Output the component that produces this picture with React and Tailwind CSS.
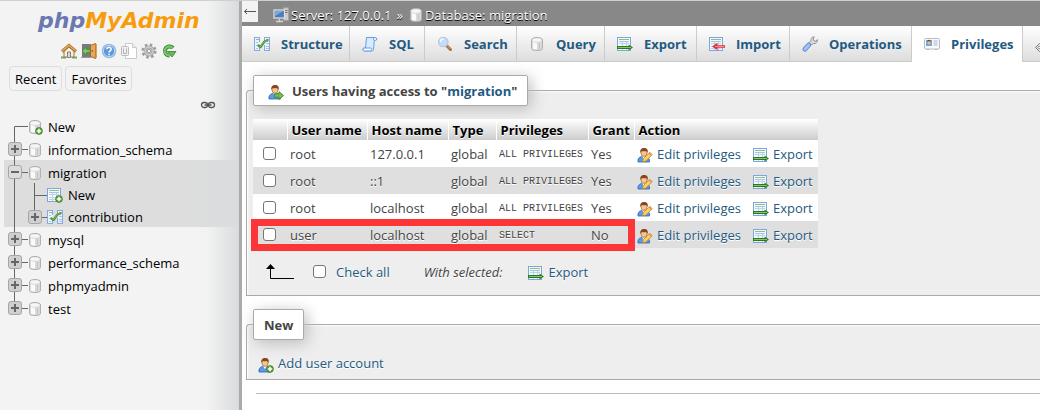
import React from 'react';

function Svg({ children, className = '' }) {
  return (
    <svg width="16" height="16" viewBox="0 0 16 16" fill="none" aria-hidden="true" className={'block shrink-0 ' + className}>
      {children}
    </svg>
  );
}

function Plus() {
  return (
    <g>
      <circle cx="12" cy="12" r="3.4" fill="#5fa53c" stroke="#3f7d26" strokeWidth=".8" />
      <path d="M12 9.800v4.400M9.800 12h4.400" stroke="#fff" strokeWidth="1.500" />
    </g>
  );
}

function Cylinder() {
  return (
    <g>
      <path d="M2.500 4c0-1.700 2.500-2.500 5.500-2.500s5.500.8 5.500 2.500v8.500c0 1.400-2.500 2-5.500 2s-5.500-.6-5.500-2z" fill="#d9d9d9" stroke="#b0b0b0" />
      <path d="M4 6c2 .8 3 .8 4 .8v6.700c-2 0-4-.4-4-1z" fill="#fafafa" />
      <path d="M10.500 7v6" stroke="#c4c4c4" />
      <ellipse cx="8" cy="4" rx="4.600" ry="1.800" fill="#f6f6f6" />
    </g>
  );
}

function Sheet() {
  return (
    <g>
      <rect x=".5" y="1.500" width="13" height="13" fill="#f4f9ff" stroke="#7fa6dc" />
      <path d="M2 3.500h10" stroke="#8cc27e" />
      <path d="M2 5.500h10" stroke="#a9c2e6" />
      <path d="M2 7.500h10M2 10.500h10M2 12.500h10M5.500 6v8M9.500 6v8" stroke="#bdd0ec" />
    </g>
  );
}

function Person() {
  return (
    <g>
      <path d="M1 15c-.6-3 1-5 3.500-5.500h4.500c2.500.5 4 2.500 3.500 5.500z" fill="#5a9be6" stroke="#2c62b5" strokeWidth=".8" />
      <path d="M5 9l2 3 2-3z" fill="#fff" />
      <ellipse cx="7" cy="5.800" rx="3" ry="3.600" fill="#f3c795" stroke="#a5652d" strokeWidth=".7" />
      <path d="M3.300 6C2.800 2.500 4.600.8 7.200.9c2.700 0 4.200 1.900 3.500 5.100-.7-1-1-1.800-1.400-2C7.500 4.400 5.600 4.200 4.500 4z" fill="#87461b" />
    </g>
  );
}

const ICONS = {
  db: <Cylinder />,
  dbNew: <g><Cylinder /><Plus /></g>,
  tableNew: <g><Sheet /><Plus /></g>,
  structure: (
    <g>
      <path d="M0 1h6v14H0zM10 1h6v14h-6z" fill="#eaf2fc" />
      <path d="M.5 1v14M5.500 1v5M5.500 11v4M10.500 1v4M10.500 9v6M15.500 1v14M0 14.500h6M10 14.500h6M0 1.500h6M10 1.500h6" stroke="#86abdf" />
      <path d="M2 3.500h3M12 3.500h3" stroke="#8cc27e" />
      <path d="M2 6.500h2M2 9.500h2M2 12.500h2M12 7.500h3M12 10.500h3M12 12.500h3" stroke="#a9c2e6" />
      <path d="M4.500 9.500L6.500 11l4-5.500 3-1" stroke="#4b8f3f" strokeWidth="2.200" strokeLinejoin="round" strokeLinecap="round" />
      <path d="M5 9.700l1.500 1 3.700-5.200 3.200-1" stroke="#7fbf70" strokeWidth=".8" />
    </g>
  ),
  sql: (
    <g stroke="#6a9de0">
      <path d="M4.500 1.500h9c1.700 0 1.800 3 0 3h-1.200l-.8 9c-.2 1.300-1 1.500-2 1.500H2.300c-1.800 0-2-3-.3-3h1.500z" fill="#d8eafe" />
      <path d="M2.500 12h6.500c1.200 0 .8 2.500 0 3H2.300C.5 14.500.7 12 2.500 12zM12.300 4.500c-1.200 0-1.200-3 .7-3" fill="#f5faff" />
    </g>
  ),
  search: (
    <g>
      <path d="M9.500 9.500l4 4" stroke="#a56d3b" strokeWidth="3" strokeLinecap="round" />
      <path d="M10 9.500l3.500 3.500" stroke="#d9a46e" strokeLinecap="round" />
      <circle cx="6.300" cy="6" r="4.700" fill="#c4ddfa" stroke="#b3c8e4" strokeWidth="1.300" />
      <path d="M3.500 6c0-2 1-3 3-3" stroke="#fff" strokeWidth="1.300" />
    </g>
  ),
  export: (
    <g>
      <Sheet />
      <path d="M0 11.500h12" stroke="#2b7a1f" strokeWidth="3" />
      <path d="M11.500 8.500l4.500 3-4.500 3z" fill="#2b7a1f" />
      <path d="M1 11.500h13" stroke="#86c36b" />
    </g>
  ),
  import: (
    <g>
      <Sheet />
      <path d="M16 10.500H8" stroke="#dc3535" strokeWidth="2.600" />
      <path d="M8.500 6.800L3 10.500l5.500 3.700z" fill="#dc3535" />
      <path d="M15 10.500H6" stroke="#fa8e8e" />
    </g>
  ),
  wrench: (
    <g>
      <path d="M7.500 9.500L6 7.500l3-2.500c-.4-2.500 1-4.200 3.300-4.200L11.200 3l.6 1.700 1.800.4 1.900-1.500c.3 2.800-1.700 4.400-4.100 4z" fill="#dadada" stroke="#8d8d8d" strokeWidth=".9" />
      <path d="M3 13.200l3.700-4.200" stroke="#5d86cf" strokeWidth="4.800" strokeLinecap="round" />
      <path d="M3 13.200l3.700-4.200" stroke="#a3c3f5" strokeWidth="3" strokeLinecap="round" />
    </g>
  ),
  card: (
    <g>
      <rect x=".5" y="2.500" width="15" height="10.500" rx="1" fill="#fafafa" stroke="#bababa" />
      <rect x="2" y="4" width="6" height="6" fill="#6aa7e8" />
      <ellipse cx="5" cy="6.500" rx="1.500" ry="2" fill="#eeb988" />
      <path d="M3.300 6c0-3 3.500-3 3.500 0l-1.500-1z" fill="#7a431e" />
      <path d="M9.500 5h4M9.500 7h4M9.500 9h4M3 13.500h2M11 13.500h2" stroke="#9cb7d5" />
    </g>
  ),
  users: (
    <g>
      <Person />
      <path d="M6.500 9.800H11V7.600l4.600 4-4.600 3.900v-2.300H6.500z" fill="#75bd55" stroke="#3c812a" strokeWidth=".8" />
    </g>
  ),
  userNew: <g><Person /><Plus /></g>,
  userEdit: (
    <g>
      <Person />
      <path d="M5.500 14.800l.8-3.200 6.500-6.300 2.500 2.400-6.500 6.300z" fill="#fbd25c" stroke="#c88722" strokeWidth=".8" />
      <path d="M12 6l2.600 2.500" stroke="#e98d74" strokeWidth="1.300" />
    </g>
  ),
  home: (
    <g>
      <path d="M0 14.500h5M11 14.500h5" stroke="#72ad4a" strokeWidth="2" />
      <path d="M3 7.500v6.500h10V7.500l-5-4.500z" fill="#f8efdc" stroke="#9b7b51" />
      <path d="M6.500 9h3v5.500h-3z" fill="#d9d9d9" stroke="#818181" />
      <path d="M1 8.500l7-6 7 6" stroke="#a5692b" strokeWidth="3" />
      <path d="M1 8.300l7-6 7 6" stroke="#e5b069" strokeWidth="1.400" />
    </g>
  ),
  exit: (
    <g>
      <path d="M1 1h9v13H1z" fill="#777b80" />
      <path d="M0 14.500h10" stroke="#999" />
      <path d="M9.500 2.500l5-2v15l-5-2z" fill="#e7a85a" stroke="#a8682b" />
      <path d="M15 1v14" stroke="#c88745" strokeWidth="1.500" />
      <path d="M9 6.500H5.500V4L1 8l4.500 4V9.500H9z" fill="#7cc863" stroke="#3f8b30" strokeWidth=".8" />
      <circle cx="11.300" cy="8" r=".8" fill="#7a4614" />
    </g>
  ),
  help: (
    <g>
      <circle cx="8" cy="8" r="6.700" fill="#5e98da" stroke="#9ab9df" strokeWidth="1.200" />
      <circle cx="8" cy="8" r="5.600" stroke="#d8e8fa" strokeWidth=".8" />
      <path d="M5.900 6.300c.1-2.700 4.300-2.600 4.200 0 0 1.500-2 1.500-2 3.200M8 10.700v1.600" stroke="#fff" strokeWidth="1.600" />
    </g>
  ),
  docs: (
    <g>
      <path d="M4.500.5h7l4 4v11h-11z" fill="#fff" stroke="#cacaca" />
      <path d="M11.500.5v4h4" fill="#eee" stroke="#cacaca" />
      <rect x=".5" y="3.500" width="7" height="9" rx="1" fill="#f0f0f0" stroke="#bbb" />
      <path d="M2.500 5.500v5h3v-5" stroke="#b5b5b5" />
    </g>
  ),
  gear: (
    <g>
      <circle cx="8" cy="8" r="6.300" stroke="#9b9b9b" strokeWidth="2.600" strokeDasharray="2.500 2.448" />
      <circle cx="8" cy="8" r="4" fill="#dedede" stroke="#a3a3a3" strokeWidth="3" />
      <circle cx="8" cy="8" r="4" stroke="#cfcfcf" strokeWidth="1.400" />
      <circle cx="8" cy="8" r="1.800" fill="#f3f3f3" stroke="#999" />
    </g>
  ),
  reload: (
    <g>
      <path d="M12 5A4.600 4.600 0 1 0 8.500 12.600" stroke="#388232" strokeWidth="4" />
      <path d="M11.800 5.200A4.500 4.500 0 1 0 8.500 12.500" stroke="#74c568" strokeWidth="2.400" />
      <path d="M6.500 8.500H15L11 14z" fill="#65b957" stroke="#388232" strokeWidth=".8" />
    </g>
  ),
  server: (
    <g>
      <path d="M10.500.8h5v12.500h-5z" fill="#cdcdcd" stroke="#a3a3a3" />
      <path d="M12 3.500h2.500M12 5.500h2.500" stroke="#6d6d6d" />
      <rect x="1" y="3" width="10.500" height="8" fill="#4d7dbb" stroke="#dcdcdc" strokeWidth="1.300" />
      <path d="M2 4h8.500l-8.500 5z" fill="#7da6dc" />
      <path d="M6.300 12v2M3 14.500h7" stroke="#d5d5d5" strokeWidth="1.300" />
    </g>
  ),
  link: (
    <g stroke="#555">
      <rect x="1.500" y="4.500" width="6" height="5" rx="2.500" strokeWidth="1.300" />
      <rect x="8.500" y="4.500" width="6" height="5" rx="2.500" strokeWidth="1.300" />
      <path d="M4.500 7h7" strokeWidth="1.500" />
    </g>
  ),
  diamonds: (
    <g stroke="#777">
      <path d="M5.500 4.500L1.500 8.500l4 4 4-4z" fill="#e5e5e5" />
      <path d="M5.500 7l-1.500 1.500L5.500 10 7 8.500z" fill="#fff" />
    </g>
  ),
};

function Icon({ name, className }) {
  return <Svg className={className}>{ICONS[name]}</Svg>;
}

const LINE = '#666';

function Branch({ kind }) {
  return (
    <svg width="20" height="23" viewBox="0 0 20 23" fill="none" aria-hidden="true" className="block shrink-0">
      {kind === 'first' && <path d="M6.500 23V12.500H20" stroke={LINE} />}
      {kind === 'pass' && <path d="M6.500 0v23" stroke={LINE} />}
      {kind === 'tee' && <path d="M6.500 0v23M6.500 12.500H20" stroke={LINE} />}
      {(kind === 'plus' || kind === 'minus' || kind === 'last') && (
        <g>
          <path d={kind === 'last' ? 'M6.500 0v12M13 12.500h7' : 'M6.500 0v23M13 12.500h7'} stroke={LINE} />
          <rect x=".5" y="5.500" width="13" height="13" rx="2.500" fill={kind === 'minus' ? '#dcdcdc' : '#d0d0d0'} stroke="#a6a6a6" />
          <path d={kind === 'minus' ? 'M3 12h8' : 'M3 12h8M7 8v8'} stroke="#666" strokeWidth="2" />
        </g>
      )}
    </svg>
  );
}

function TreeRow({ branches, icon, label, nested }) {
  return (
    <li className={'flex items-center overflow-hidden pl-[4px] ' + (nested ? 'h-[22px]' : 'h-[23px]')}>
      {branches.map((b, i) => <Branch key={i} kind={b} />)}
      <Icon name={icon} className="mt-[2px] -ml-px" />
      <a href="#tree" className="ml-[5px] pt-[2px] leading-[20px] text-black">{label}</a>
    </li>
  );
}

const TABS = [
  ['structure', 'Structure', 'w-[108px]'],
  ['sql', 'SQL', 'w-[75px]'],
  ['search', 'Search', 'w-[92px]'],
  ['db', 'Query', 'w-[88px]'],
  ['export', 'Export', 'w-[92px]'],
  ['import', 'Import', 'w-[93px]'],
  ['wrench', 'Operations', 'w-[122px]'],
  ['card', 'Privileges', 'w-[111px]'],
];

const USERS = [
  ['root', '127.0.0.1', 'ALL PRIVILEGES', 'Yes'],
  ['root', '::1', 'ALL PRIVILEGES', 'Yes'],
  ['root', 'localhost', 'ALL PRIVILEGES', 'Yes'],
  ['user', 'localhost', 'SELECT', 'No'],
];

const HEADS = [
  ['', 'w-[34px]'],
  ['User name', 'w-[80px]'],
  ['Host name', 'w-[81px]'],
  ['Type', 'w-[48px]'],
  ['Privileges', 'w-[92px]'],
  ['Grant', 'w-[46px]'],
  ['Action', 'w-[184px]'],
];

const CHECK = 'block size-[13px] appearance-none rounded-[3px] border border-[#767676] bg-white';
const LEGEND = 'ml-[6px] flex h-[31px] items-center rounded-[2px] border border-[#aaa] bg-white px-[10px] font-bold shadow-[3px_3px_15px_#bbb]';
const FIELDSET = 'ml-[4px] min-w-0 rounded-tl-[4px] border border-r-0 border-[#aaa] bg-[#eee] shadow-[inset_1px_1px_2px_#fff]';

function IconLink({ icon, children }) {
  return (
    <a href="#action" className="flex items-center gap-[4px] whitespace-nowrap text-[#235a81]">
      <Icon name={icon} className="mt-[3px]" />
      {children}
    </a>
  );
}

function Sidebar() {
  return (
    <aside className="w-[242px] shrink-0 border-r-[3px] border-[#aaa] bg-[#f3f3f3] bg-[linear-gradient(to_right,#f3f3f3_86%,#d9dcde)] text-black">
      <div className="pl-[38px] pt-[2px] text-[22px] leading-[32px]">
        <a href="#home" className="font-['DejaVu_Sans',sans-serif] font-bold italic text-[#6c78af]">
          php<span className="text-[#f89c0e]">MyAdmin</span>
        </a>
      </div>
      <nav aria-label="Shortcuts" className="flex gap-[4px] pl-[61px] pt-[6px]">
        {['home', 'exit', 'help', 'docs', 'gear', 'reload'].map((n) => (
          <a key={n} href="#shortcut" aria-label={n}><Icon name={n} /></a>
        ))}
      </nav>
      <div className="flex gap-[3px] pl-[9px] pt-[7px]">
        {['Recent', 'Favorites'].map((t) => (
          <button key={t} type="button" className="h-[25px] rounded-[4px] border border-[#ddd] px-[5px] leading-[20px]">{t}</button>
        ))}
      </div>
      <div className="flex justify-end pr-[23px] pt-[7px]">
        <a href="#link" aria-label="Unlink from main panel"><Icon name="link" /></a>
      </div>
      <ul className="pl-[4px]">
        <TreeRow branches={['first']} icon="dbNew" label="New" />
        <TreeRow branches={['plus']} icon="db" label="information_schema" />
        <li className="bg-[linear-gradient(to_right,#ddd_80%,#d9dcde)]">
          <ul>
            <TreeRow branches={['minus']} icon="db" label="migration" />
            <TreeRow nested branches={['pass', 'tee']} icon="tableNew" label="New" />
            <TreeRow nested branches={['pass', 'last']} icon="structure" label="contribution" />
          </ul>
        </li>
        <TreeRow branches={['plus']} icon="db" label="mysql" />
        <TreeRow branches={['plus']} icon="db" label="performance_schema" />
        <TreeRow branches={['plus']} icon="db" label="phpmyadmin" />
        <TreeRow branches={['last']} icon="db" label="test" />
      </ul>
    </aside>
  );
}

function UserTable() {
  return (
    <div className="relative w-[565px]">
      <table className="w-full table-fixed border-collapse text-left">
        <thead>
          <tr className="h-[21px] bg-[linear-gradient(#fff,#ccc)] text-black">
            {HEADS.map(([h, w]) => (
              <th key={w} scope="col" className={'whitespace-nowrap border-r border-white p-0 pl-[4px] font-bold leading-[20px] last:border-r-0 ' + w}>
                {h}
              </th>
            ))}
          </tr>
        </thead>
        <tbody>
          {USERS.map(([user, host, priv, grant], i) => (
            <tr key={i} className="h-[27px] odd:bg-white even:bg-[#dfdfdf]">
              <td className="p-0 pl-[10px]"><input type="checkbox" aria-label={user + ' ' + host} className={CHECK} /></td>
              <td className="p-0 pl-[3px]">{user}</td>
              <td className="p-0 pl-[3px]">{host}</td>
              <td className="p-0 pl-[3px]">global</td>
              <td className="whitespace-nowrap p-0 pl-[3px] pt-[3px] font-['Liberation_Mono',monospace] text-[10px]">{priv}</td>
              <td className="p-0 pl-[3px]">{grant}</td>
              <td className="p-0 pl-[3px]">
                <div className="flex gap-[12px]">
                  <IconLink icon="userEdit">Edit privileges</IconLink>
                  <IconLink icon="export">Export</IconLink>
                </div>
              </td>
            </tr>
          ))}
        </tbody>
      </table>
      <div className="pointer-events-none absolute -bottom-[3px] -left-[2px] h-[32px] w-[384px] border-[7px] border-[#fc3636]" />
    </div>
  );
}

export default function App() {
  return (
    <div className="flex min-h-screen border-t border-[#d0d0d0] bg-white font-['Open_Sans','Noto_Sans',sans-serif] text-[13px] leading-[20px] text-[#444]">
      <Sidebar />
      <main className="min-w-0 flex-1 overflow-hidden">
        <header className="flex h-[25px] items-start bg-[#888] text-white [text-shadow:0_1px_0_#000]">
          <button type="button" aria-label="Hide panel" className="flex h-[21px] w-[16px] items-center justify-center bg-[#f3f3f3]">
            <svg width="14" height="12" viewBox="0 0 14 12" fill="none" stroke="#555" aria-hidden="true"><path d="M1 5.500h12M4 3L1.500 5.500 4 8" /></svg>
          </button>
          <nav aria-label="Breadcrumb" className="flex items-center pl-[15px] pt-[4px]">
            <Icon name="server" />
            <a href="#server" className="ml-[2px]">Server: 127.0.0.1</a>
            <span className="mx-[5px]">»</span>
            <Icon name="db" />
            <a href="#database" className="ml-px">Database: migration</a>
          </nav>
        </header>
        <nav aria-label="Database" className="flex h-[36px] bg-[linear-gradient(#fff,#dcdcdc)]">
          {TABS.map(([icon, label, w]) => (
            <a
              key={label}
              href="#tab"
              className={'flex shrink-0 items-center gap-[11px] border-r border-[#ccc] pl-[12px] font-bold text-[#235a81] ' + w + (label === 'Privileges' ? ' bg-white' : ' border-b')}
            >
              <Icon name={icon} />
              {label}
            </a>
          ))}
          <a href="#more" aria-label="More" className="flex flex-1 items-center border-b border-[#ccc] pl-[11px] pt-[6px]"><Icon name="diamonds" /></a>
        </nav>

        <fieldset className={FIELDSET + ' mt-[13px]'}>
          <legend className={LEGEND}>
            <Icon name="users" className="mx-[4px] mt-[2px]" />
            <span className="ml-[4px]">Users having access to "<a href="#db" className="text-[#235a81]">migration</a>"</span>
          </legend>
          <div className="pl-[6px] pt-[13px] [text-shadow:0_1px_0_#fff]">
            <UserTable />
            <div className="flex h-[47px] items-center">
              <svg width="28" height="16" viewBox="0 0 28 16" fill="none" aria-hidden="true" className="ml-[13px]">
                <path d="M4.500 3v11.500H28" stroke="#000" />
                <path d="M4.500 0L9 5H0z" fill="#000" />
              </svg>
              <label className="ml-[19px] flex items-center gap-[10px] text-[#235a81]">
                <input type="checkbox" className={CHECK} />
                Check all
              </label>
              <em className="ml-[34px] mr-[26px]">With selected:</em>
              <IconLink icon="export">Export</IconLink>
            </div>
          </div>
        </fieldset>

        <fieldset className={FIELDSET + ' mt-[13px]'}>
          <legend className={LEGEND}>New</legend>
          <div className="flex h-[39px] items-center pl-[11px] pt-[7px] [text-shadow:0_1px_0_#fff]">
            <IconLink icon="userNew">Add user account</IconLink>
          </div>
        </fieldset>
        <hr className="ml-[14px] mt-[13px] border-[#bbb]" />
      </main>
    </div>
  );
}
